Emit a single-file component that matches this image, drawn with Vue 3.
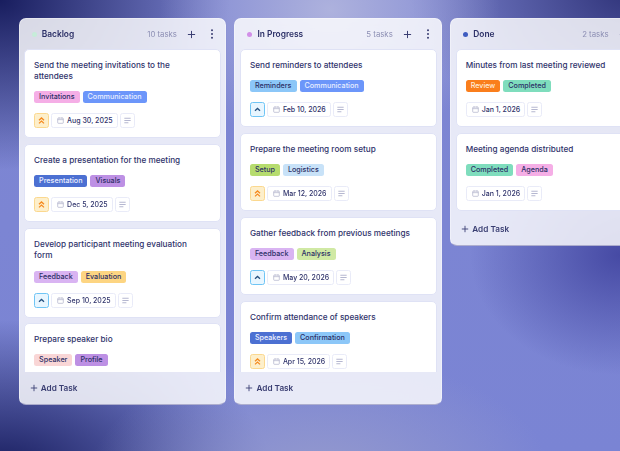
<script setup>
const columns = [
  { name: 'Backlog', dot: '#c6ecd9', count: '10 tasks', clip: true, cards: [
    { title: 'Send the meeting invitations to the attendees', tags: [['Invitations', 'pink'], ['Communication', 'blue']], pri: 'high', date: 'Aug 30, 2025' },
    { title: 'Create a presentation for the meeting', tags: [['Presentation', 'indigo'], ['Visuals', 'purple']], pri: 'high', date: 'Dec 5, 2025' },
    { title: 'Develop participant meeting evaluation form', tags: [['Feedback', 'lilac'], ['Evaluation', 'amber']], pri: 'med', date: 'Sep 10, 2025' },
    { title: 'Prepare speaker bio', tags: [['Speaker', 'rose'], ['Profile', 'purple']], pri: null, date: null },
  ] },
  { name: 'In Progress', dot: '#d28fe8', count: '5 tasks', clip: true, cards: [
    { title: 'Send reminders to attendees', tags: [['Reminders', 'sky'], ['Communication', 'blue']], pri: 'med', date: 'Feb 10, 2026' },
    { title: 'Prepare the meeting room setup', tags: [['Setup', 'lime'], ['Logistics', 'pale']], pri: 'high', date: 'Mar 12, 2026' },
    { title: 'Gather feedback from previous meetings', tags: [['Feedback', 'lilac'], ['Analysis', 'sage']], pri: 'med', date: 'May 20, 2026' },
    { title: 'Confirm attendance of speakers', tags: [['Speakers', 'indigo'], ['Confirmation', 'sky']], pri: 'high', date: 'Apr 15, 2026' },
  ] },
  { name: 'Done', dot: '#3f5cc0', count: '2 tasks', clip: false, cards: [
    { title: 'Minutes from last meeting reviewed', tags: [['Review', 'orange'], ['Completed', 'mint']], pri: null, date: 'Jan 1, 2026' },
    { title: 'Meeting agenda distributed', tags: [['Completed', 'mint'], ['Agenda', 'pink']], pri: null, date: 'Jan 1, 2026' },
  ] },
]
</script>

<template>
  <main class="board">
    <section v-for="col in columns" :key="col.name" class="column">
      <header class="col-head">
        <span class="dot" :style="{ background: col.dot }"></span>
        <h2 class="col-name">{{ col.name }}</h2>
        <span class="count">{{ col.count }}</span>
        <svg class="head-icon" viewBox="0 0 10 10" aria-hidden="true"><path d="M5 1v8M1 5h8" /></svg>
        <svg class="head-more" viewBox="0 0 4 10" aria-hidden="true">
          <circle cx="2" cy="1.2" r="1" /><circle cx="2" cy="5" r="1" /><circle cx="2" cy="8.8" r="1" />
        </svg>
      </header>
      <div class="list" :class="{ clip: col.clip }">
        <article v-for="card in col.cards" :key="card.title" class="card">
          <h3 class="title">{{ card.title }}</h3>
          <div class="tags">
            <span v-for="t in card.tags" :key="t[0]" class="tag" :class="t[1]">{{ t[0] }}</span>
          </div>
          <div v-if="card.date" class="meta">
            <span v-if="card.pri" class="pri" :class="card.pri">
              <svg viewBox="0 0 10 10" aria-hidden="true">
                <template v-if="card.pri === 'high'">
                  <path d="M2.2 4.8l2.8-2.6 2.8 2.6" /><path d="M2.2 8.2l2.8-2.6 2.8 2.6" />
                </template>
                <path v-else d="M2.2 6.4l2.8-2.6 2.8 2.6" />
              </svg>
            </span>
            <span class="date">
              <svg viewBox="0 0 10 10" aria-hidden="true">
                <rect x="1" y="1.5" width="8" height="7.5" rx="1" /><path d="M1 3.8h8M3 .6v1.6M7 .6v1.6" />
              </svg>
              {{ card.date }}
            </span>
            <span class="desc">
              <svg viewBox="0 0 10 10" aria-hidden="true"><path d="M1.5 2.5h7M1.5 5h7M1.5 7.5h4.5" /></svg>
            </span>
          </div>
        </article>
      </div>
      <footer class="add">
        <svg viewBox="0 0 10 10" aria-hidden="true"><path d="M5 1v8M1 5h8" /></svg>
        Add Task
      </footer>
    </section>
  </main>
</template>

<style scoped>
.board {
  width: 620px;
  height: 451px;
  box-sizing: border-box;
  overflow: hidden;
  padding: 18.3px 0 0 18.7px;
  display: flex;
  align-items: flex-start;
  gap: 8px;
  font-family: Inter, "Liberation Sans", sans-serif;
  color: #2b2f66;
  background:
    radial-gradient(170px 140px at 330px 10px, rgba(176, 180, 222, .95), rgba(176, 180, 222, 0)),
    radial-gradient(230px 120px at 320px 475px, rgba(150, 155, 205, .95), rgba(150, 155, 205, 0)),
    radial-gradient(230px 170px at 0px 0px, #181d5e, rgba(24, 29, 94, 0)),
    radial-gradient(270px 150px at 0px 470px, #181d5e, rgba(24, 29, 94, 0)),
    radial-gradient(220px 160px at 630px -10px, #2f3379, rgba(47, 51, 121, 0)),
    radial-gradient(150px 120px at 620px 255px, #464aa4, rgba(70, 74, 164, 0)),
    linear-gradient(#7e86d2, #7a84d4);
}
.column {
  flex: 0 0 auto;
  width: 207.8px;
  box-sizing: border-box;
  border: 1px solid rgba(255, 255, 255, .35);
  border-bottom-color: rgba(150, 150, 190, .7);
  border-radius: 7px;
  background: rgba(255, 255, 255, .82);
  overflow: hidden;
  backdrop-filter: blur(16px);
}
.col-head {
  height: 29.4px;
  display: flex;
  align-items: center;
  padding: 1px 11.5px 0 12px;
  box-sizing: border-box;
}
.dot {
  width: 5px;
  height: 5px;
  border-radius: 50%;
  margin-right: 5px;
}
.col-name {
  margin: 0;
  font-size: 8.4px;
  font-weight: 600;
  color: #2b2f66;
}
.count {
  margin-left: auto;
  font-size: 7.8px;
  color: #8d8fb4;
  margin-right: 10.5px;
}
.head-icon {
  width: 9px;
  height: 9px;
  margin-right: 13.5px;
}
.head-icon path {
  fill: none;
  stroke: #3a3e72;
  stroke-width: 1.1;
}
.head-more {
  width: 4px;
  height: 10px;
}
.head-more circle {
  fill: #3a3e72;
}
.list {
  padding: 0 4.4px 2px;
  display: flex;
  flex-direction: column;
  gap: 5.7px;
}
.list.clip {
  height: 323px;
  box-sizing: border-box;
  padding-bottom: 0;
  overflow: hidden;
}
.card {
  flex: 0 0 auto;
  background: #fff;
  border: 1px solid #dfe2f5;
  border-radius: 5px;
  padding: 9px;
}
.title {
  margin: 0 0 8.8px;
  padding: 1.2px 12px 0 0;
  font-size: 8.2px;
  font-weight: 450;
  line-height: 11.3px;
  color: #2f336b;
}
.tags {
  display: flex;
  gap: 3px;
  margin-bottom: 10px;
}
.tag {
  height: 12px;
  line-height: 12px;
  padding: 0 5px;
  border-radius: 2.5px;
  font-size: 7.2px;
  font-weight: 450;
  color: #2b2f66;
}
.pink { background: #f5aee6; }
.blue { background: #6c96fa; color: #e8eeff; }
.indigo { background: #4c70d2; color: #eef1ff; }
.purple { background: #bd90e4; }
.lilac { background: #d9b4f2; }
.amber { background: #fdd582; }
.rose { background: #f9d6d6; }
.sky { background: #8cc7f8; }
.lime { background: #b6dc6e; }
.pale { background: #c8e2f8; }
.sage { background: #d0e9a4; }
.orange { background: #fa7e1c; color: #ffeedd; }
.mint { background: #7fddbd; }
.meta {
  display: flex;
  gap: 2px;
  height: 15px;
}
.pri, .desc {
  width: 15px;
  height: 15px;
  box-sizing: border-box;
  border-radius: 2.5px;
  display: flex;
  align-items: center;
  justify-content: center;
  border: 1px solid #e9ebf8;
}
.pri svg, .desc svg {
  width: 9px;
  height: 9px;
  fill: none;
  stroke-width: 1.1;
}
.pri.high {
  background: #fdefcb;
  border-color: #fbd88f;
}
.pri.high svg {
  stroke: #f58a1f;
  stroke-width: 1.4;
}
.pri.med {
  background: #e8f6ff;
  border-color: #6fc5f5;
}
.pri.med svg {
  stroke: #24507f;
  stroke-width: 1.4;
}
.date {
  display: flex;
  align-items: center;
  gap: 3px;
  height: 15px;
  box-sizing: border-box;
  padding: 0 4px 0 5px;
  border: 1px solid #e9ebf8;
  border-radius: 2.5px;
  font-size: 7px;
  font-weight: 550;
  color: #2f336b;
  white-space: nowrap;
}
.date svg {
  width: 7px;
  height: 7px;
  fill: none;
  stroke: #a6a8c4;
  stroke-width: .9;
}
.desc svg { stroke: #b4b6cf; }
.add {
  height: 32px;
  display: flex;
  align-items: center;
  gap: 3px;
  padding: 0 0 0 10px;
  font-size: 8.2px;
  font-weight: 600;
  color: #3a3e72;
}
.add svg {
  width: 8px;
  height: 8px;
  fill: none;
  stroke: #3a3e72;
  stroke-width: 1.1;
}
</style>

<style>
html, body { margin: 0; overflow: hidden; }
</style>
